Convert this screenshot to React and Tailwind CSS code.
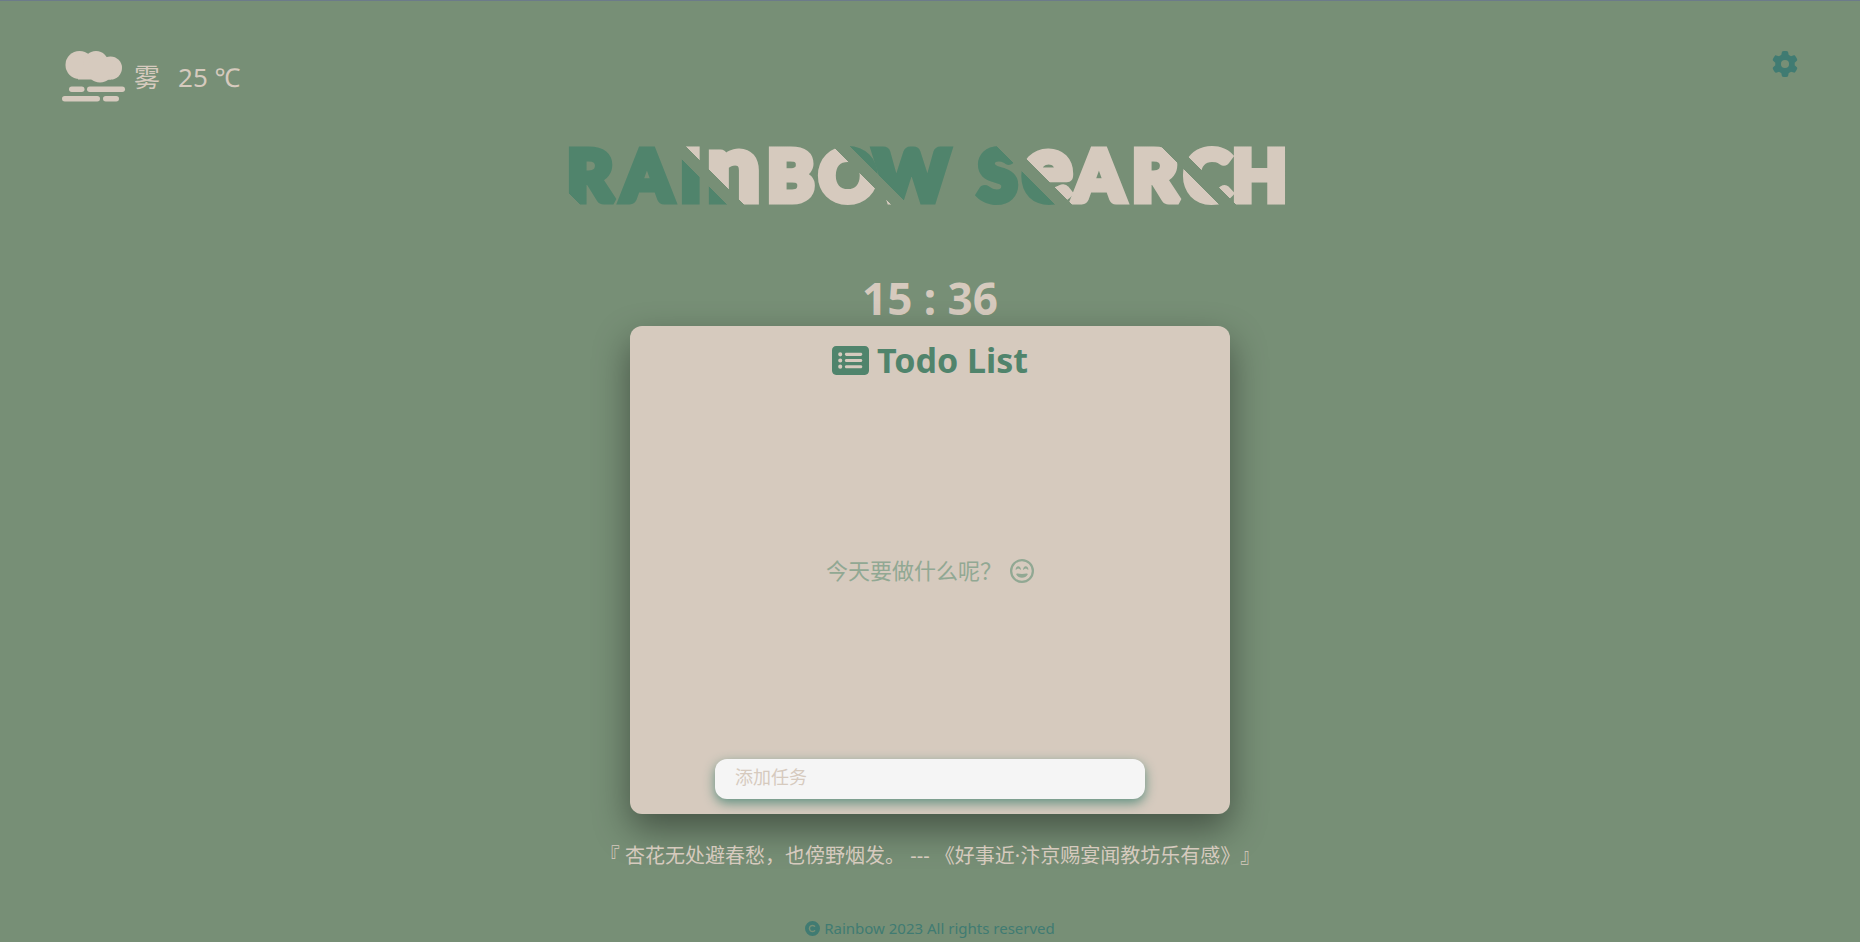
import { FaGear, FaRectangleList, FaRegFaceGrinBeam, FaCopyright } from "react-icons/fa6";

const GREEN = "#50846c";
const CREAM = "#d6cabe";
const BANDS = [GREEN, CREAM, GREEN, CREAM, CREAM];

const LETTERS = [
  { ch: "R", x: 7 },
  { ch: "A", x: 62 },
  { ch: "I", x: 120 },
  { ch: "n", x: 147, lower: true },
  { ch: "B", x: 207 },
  { ch: "O", x: 259 },
  { ch: "W", x: 314 },
  { ch: "S", x: 418 },
  { ch: "e", x: 462, lower: true },
  { ch: "A", x: 514 },
  { ch: "R", x: 572 },
  { ch: "C", x: 624 },
  { ch: "H", x: 672 },
];

function Logo() {
  return (
    <svg
      viewBox="0 -37 740 139"
      className="h-[139px] w-[740px] max-w-full font-['Lato','Liberation_Sans',sans-serif] font-black"
    >
      <defs>
        <linearGradient id="bands" gradientUnits="userSpaceOnUse" x1="-22.5" y1="22.5" x2="387.5" y2="-387.5">
          <stop offset="0" stopColor={GREEN} stopOpacity="0" />
          {BANDS.map((color, i) => [
            <stop key={`a${i}`} offset={i * 0.2} stopColor={color} />,
            <stop key={`b${i}`} offset={i * 0.2 + 0.18} stopColor={color} />,
            <stop key={`c${i}`} offset={i * 0.2 + 0.18} stopColor={color} stopOpacity={i === 4 ? 1 : 0} />,
            <stop key={`d${i}`} offset={i * 0.2 + 0.2} stopColor={color} stopOpacity={i === 4 ? 1 : 0} />,
          ])}
        </linearGradient>
      </defs>
      {LETTERS.map(({ ch, x, lower }, i) => (
        <text
          key={i}
          x={x}
          y="61"
          fontSize={lower ? 94 : 71}
          fill="url(#bands)"
          stroke="url(#bands)"
          strokeWidth="7"
          strokeLinejoin="miter"
          strokeMiterlimit="2"
        >
          {ch}
        </text>
      ))}
    </svg>
  );
}

function FogIcon() {
  return (
    <svg viewBox="0 0 64 52" className="h-[52px] w-16 fill-[#d6cabe]" aria-hidden="true">
      <circle cx="17.5" cy="14" r="14" />
      <circle cx="34" cy="12.5" r="12.5" />
      <circle cx="48.5" cy="17" r="11.5" />
      <circle cx="38" cy="18.5" r="13" />
      <rect x="16" y="14" width="33" height="14.5" />
      <rect x="7" y="35.5" width="15.5" height="5.5" rx="2.75" />
      <rect x="25" y="35.5" width="38" height="5.5" rx="2.75" />
      <rect x="0" y="45" width="38" height="5.5" rx="2.75" />
      <rect x="41" y="45" width="16" height="5.5" rx="2.75" />
    </svg>
  );
}

export default function App() {
  return (
    <div className="flex min-h-screen flex-col border-t border-[#6c7b8a] bg-[#778f76] font-['Noto_Sans','Noto_Sans_CJK_SC',sans-serif] text-[#d6cabe]">
      <header className="flex items-start justify-between px-[62px] pt-[50px]">
        <div className="flex items-center gap-2 text-[26px] leading-[50px]">
          <FogIcon />
          <span>雾</span>
          <span className="ml-[10px]">25 ℃</span>
        </div>
        <button type="button" aria-label="设置" className="text-[#407b72]">
          <FaGear className="size-[26px]" />
        </button>
      </header>

      <main className="flex flex-col items-center">
        <h1>
          <Logo />
        </h1>
        <time className="mt-8 text-[44px] leading-[48px] font-bold">15 : 36</time>
        <section className="mt-1 flex h-[488px] w-[600px] max-w-full flex-col items-center rounded-xl bg-[#d6cabe] pt-3 pb-[15px] shadow-[0_15px_36px_rgba(0,0,0,0.42)]">
          <h2 className="flex items-center gap-2 text-[34px] leading-[44px] font-bold text-[#50846c]">
            <FaRectangleList className="size-[37px]" />
            Todo List
          </h2>
          <p className="flex flex-1 items-center gap-2 text-[22px] text-[#91a893]">
            今天要做什么呢？
            <FaRegFaceGrinBeam className="size-6" />
          </p>
          <input
            type="text"
            aria-label="添加任务"
            placeholder="添加任务"
            className="h-10 w-[430px] rounded-xl bg-[#f5f5f5] px-5 pb-1 text-lg text-[#50846c] shadow-[0_4px_12px_#5f9080] outline-none placeholder:text-[#d6cabe]"
          />
        </section>
        <p className="mt-[26px] text-xl leading-8 [text-spacing-trim:space-all]">
          『 杏花无处避春愁，也傍野烟发。 --- 《好事近·汴京赐宴闻教坊乐有感》』
        </p>
      </main>

      <footer className="mt-auto flex items-center justify-center gap-1 pb-1 text-[15px] leading-5 text-[#407b72]">
        <FaCopyright className="size-[15px]" />
        Rainbow 2023 All rights reserved
      </footer>
    </div>
  );
}
